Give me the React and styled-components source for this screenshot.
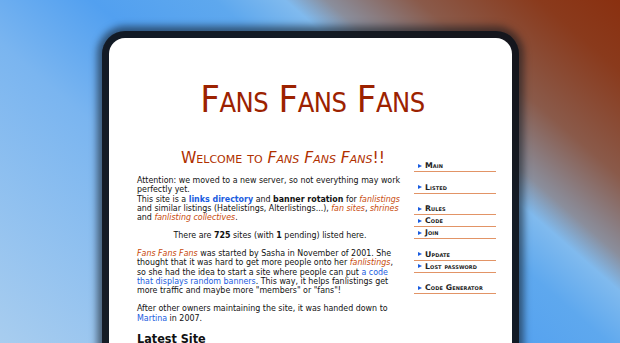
import React from "react";
import styled, { createGlobalStyle } from "styled-components";

const Global = createGlobalStyle`
  html, body {
    margin: 0;
    height: 343px;
    overflow: hidden;
  }
  body {
    background: linear-gradient(41deg,
      #a8cdef 0%, #7ab5f0 34%, #52a0f0 48%, #5ea8ee 60%, #80baee 67%,
      #8a8e9c 71%, #8a5a4a 80%, #8a3a1c 92%, #8a3010 100%);
    font-family: "DejaVu Sans", Verdana, sans-serif;
  }
`;

const Page = styled.div`
  padding: 38px 0 0 109px;
`;

const Card = styled.div`
  width: 403px;
  min-height: 420px;
  background: #fff;
  border-radius: 16px;
  box-shadow: 0 0 0 7px rgba(15, 20, 28, 0.9), 0 0 7px 12px rgba(15, 20, 28, 0.55);
`;

const Title = styled.h1`
  margin: 0;
  padding: 42px 0 0 4px;
  height: 78px;
  box-sizing: border-box;
  text-align: center;
  font-family: "DejaVu Sans Condensed", "DejaVu Sans", sans-serif;
  font-variant: small-caps;
  font-weight: normal;
  font-size: 38px;
  line-height: 38px;
  color: #9c2200;
  letter-spacing: -0.5px;
`;

const Body = styled.div`
  display: grid;
  grid-template-columns: 266px 82px;
  column-gap: 11px;
  padding: 0 0 0 28px;
  margin-top: 34px;
`;

const Main = styled.div`
  font-family: "DejaVu Sans Condensed", "DejaVu Sans", sans-serif;
  font-size: 8.8px;
  line-height: 9.3px;
  color: #111;
`;

const Welcome = styled.h2`
  margin: 0 0 9px;
  padding-left: 26px;
  text-align: center;
  font-family: "DejaVu Sans", sans-serif;
  font-variant: small-caps;
  font-weight: normal;
  font-size: 15.6px;
  line-height: 17px;
  color: #b03000;
`;

const P = styled.p`
  margin: 0 0 8.7px;
  text-align: ${(p) => (p.center ? "center" : "left")};
`;

const Fan = styled.em`
  color: #c84a0c;
`;

const Link = styled.a`
  color: #1a5ce0;
  text-decoration: none;
  font-weight: ${(p) => (p.bold ? "bold" : "normal")};
`;

const Latest = styled.h3`
  margin: 0;
  font-family: "DejaVu Sans Condensed", "DejaVu Sans", sans-serif;
  font-size: 12.5px;
  line-height: 14px;
  font-weight: bold;
  color: #111;
`;

const Side = styled.nav`
  display: flex;
  flex-direction: column;
  padding-top: 10px;
`;

const Group = styled.div`
  display: flex;
  flex-direction: column;
  margin-bottom: 9.5px;
`;

const Item = styled.a`
  display: flex;
  align-items: center;
  gap: 3px;
  height: 11px;
  padding-left: 4px;
  border-bottom: 1.5px solid #e29466;
  font-size: 7.8px;
  font-weight: bold;
  font-variant: small-caps;
  color: #222;
  text-decoration: none;
  letter-spacing: 0.1px;
`;

const Arrow = styled.span`
  width: 0;
  height: 0;
  border-top: 2.5px solid transparent;
  border-bottom: 2.5px solid transparent;
  border-left: 4px solid #1a5ce0;
`;

const groups = [
  ["Main"],
  ["Listed"],
  ["Rules", "Code", "Join"],
  ["Update", "Lost password"],
  ["Code Generator"],
];

export default function App() {
  return (
    <Page>
      <Global />
      <Card>
        <Title>Fans Fans Fans</Title>
        <Body>
          <Main>
            <Welcome>
              Welcome to <i>Fans Fans Fans</i>!!
            </Welcome>
            <P>
              Attention: we moved to a new server, so not everything may work perfectly yet.
              <br />
              This site is a <Link bold>links directory</Link> and <b>banner rotation</b> for{" "}
              <Fan>fanlistings</Fan> and similar listings (Hatelistings, Alterlistings...),{" "}
              <Fan>fan sites</Fan>, <Fan>shrines</Fan> and <Fan>fanlisting collectives</Fan>.
            </P>
            <P center>
              There are <b>725</b> sites (with <b>1</b> pending) listed here.
            </P>
            <P>
              <Fan>Fans Fans Fans</Fan> was started by Sasha in November of 2001. She thought that
              it was hard to get more people onto her <Fan>fanlistings</Fan>, so she had the idea
              to start a site where people can put <Link>a code that displays random banners</Link>.
              This way, it helps fanlistings get more traffic and maybe more "members" or "fans"!
            </P>
            <P>
              After other owners maintaining the site, it was handed down to <Link>Martina</Link> in
              2007.
            </P>
            <Latest>Latest Site</Latest>
          </Main>
          <Side>
            {groups.map((g, i) => (
              <Group key={i}>
                {g.map((label) => (
                  <Item key={label}>
                    <Arrow />
                    {label}
                  </Item>
                ))}
              </Group>
            ))}
          </Side>
        </Body>
      </Card>
    </Page>
  );
}
